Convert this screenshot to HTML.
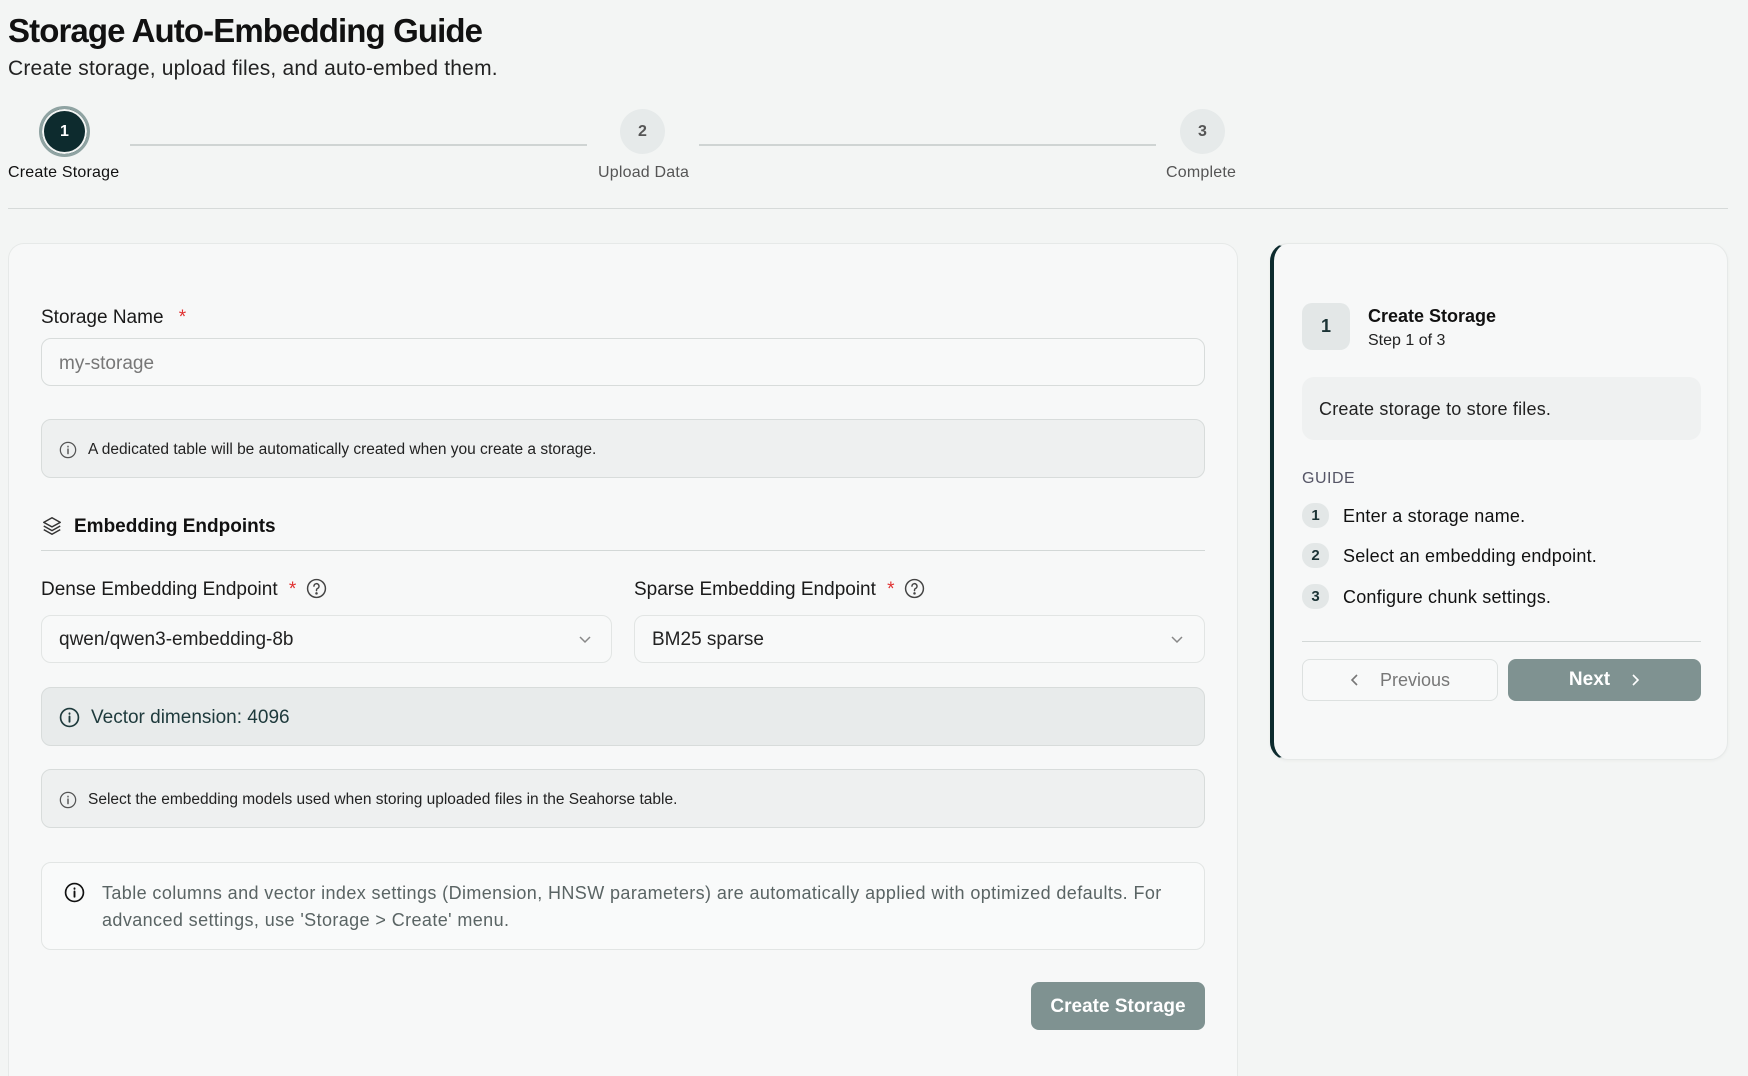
<!DOCTYPE html>
<html style="overflow:hidden;height:1076px"><head><meta charset="utf-8"><style>
*{box-sizing:border-box;margin:0;padding:0}
body{width:1748px;height:1076px;overflow:hidden;background:#f3f5f4;font-family:"Liberation Sans",sans-serif;color:#111;position:relative}
.a{position:absolute}
.t{white-space:nowrap}
.circ{border-radius:50%;display:flex;align-items:center;justify-content:center;font-weight:bold}
.box{border:1px solid #d8dcdb;border-radius:10px}
.info{background:#eef0f0;display:flex;align-items:center;padding-left:17px;font-size:15.5px;color:#222}
.ic{width:18px;height:18px;margin-right:11px;flex:none}
.sel{background:#f8f9f9;border:1px solid #e2e5e4;border-radius:10px;display:flex;align-items:center;padding-left:17px;font-size:19px;color:#222;padding-top:2px}
.lbl{font-size:19px;color:#1a1a1a}
.req{color:#e03131}
</style></head><body>
<div class="a t" style="left:8px;top:12px;font-size:33px;font-weight:bold;letter-spacing:-0.9px">Storage Auto-Embedding Guide</div>
<div class="a t" style="left:8px;top:57px;font-size:21px;color:#222;letter-spacing:.2px">Create storage, upload files, and auto-embed them.</div>

<div class="a circ" style="left:39px;top:106px;width:51px;height:51px;border:3px solid #8fa3a2;background:#0d2b2e;color:#fff;font-size:16px;box-shadow:inset 0 0 0 2px #f3f5f4">1</div>
<div class="a t" style="left:8px;top:164px;font-size:16px;color:#111;letter-spacing:.2px">Create Storage</div>
<div class="a" style="left:130px;top:144px;width:457px;height:2px;background:#cfd4d3"></div>
<div class="a circ" style="left:620px;top:109px;width:45px;height:45px;background:#e6eaea;color:#555;font-size:16px">2</div>
<div class="a t" style="left:598px;top:164px;font-size:16px;color:#555;letter-spacing:.2px">Upload Data</div>
<div class="a" style="left:699px;top:144px;width:457px;height:2px;background:#cfd4d3"></div>
<div class="a circ" style="left:1180px;top:109px;width:45px;height:45px;background:#e6eaea;color:#555;font-size:16px">3</div>
<div class="a t" style="left:1166px;top:164px;font-size:16px;color:#555;letter-spacing:.2px">Complete</div>
<div class="a" style="left:8px;top:208px;width:1720px;height:1px;background:#d6dad9"></div>

<!-- main card -->
<div class="a" style="left:8px;top:243px;width:1230px;height:833px;background:#f7f8f8;border:1px solid #e6e9e8;border-bottom:none;border-radius:16px 16px 0 0"></div>
<div class="a t lbl" style="left:41px;top:307px">Storage Name <span class="req" style="margin-left:10px">*</span></div>
<div class="a box" style="left:41px;top:338px;width:1164px;height:48px;background:#f8f9f9;display:flex;align-items:center;padding-left:17px;padding-top:3px;font-size:19px;color:#777">my-storage</div>
<div class="a box info" style="left:41px;top:419px;width:1164px;height:59px;padding-top:2px"><svg class="ic" viewBox="0 0 20 20"><circle cx="10" cy="10" r="8.5" fill="none" stroke="#555" stroke-width="1.4"/><path d="M10 9v5M10 6v.5" stroke="#555" stroke-width="1.6" stroke-linecap="round"/></svg>A dedicated table will be automatically created when you create a storage.</div>

<svg class="a" style="left:41px;top:515px" width="22" height="22" viewBox="0 0 24 24" fill="none" stroke="#333" stroke-width="1.6" stroke-linejoin="round"><path d="M12 3 3 8l9 5 9-5z"/><path d="M3 12l9 5 9-5"/><path d="M3 16l9 5 9-5"/></svg>
<div class="a t" style="left:74px;top:516px;font-size:19px;font-weight:bold">Embedding Endpoints</div>
<div class="a" style="left:41px;top:550px;width:1164px;height:1px;background:#d3d8d7"></div>

<div class="a t lbl" style="left:41px;top:579px">Dense Embedding Endpoint <span class="req" style="margin-left:6px">*</span></div>
<svg class="a" style="left:306px;top:578px" width="21" height="21" viewBox="0 0 20 20" fill="none" stroke="#444" stroke-width="1.4"><circle cx="10" cy="10" r="8.5"/><path d="M7.6 7.8a2.4 2.4 0 1 1 3.3 2.2c-.6.3-.9.8-.9 1.4v.6" stroke-linecap="round"/><circle cx="10" cy="14.6" r=".5" fill="#444"/></svg>
<div class="a t lbl" style="left:634px;top:579px">Sparse Embedding Endpoint <span class="req" style="margin-left:6px">*</span></div>
<div class="a" style="left:904px;top:578px"><svg width="21" height="21" viewBox="0 0 20 20" fill="none" stroke="#444" stroke-width="1.4"><circle cx="10" cy="10" r="8.5"/><path d="M7.6 7.8a2.4 2.4 0 1 1 3.3 2.2c-.6.3-.9.8-.9 1.4v.6" stroke-linecap="round"/><circle cx="10" cy="14.6" r=".5" fill="#444"/></svg></div>

<div class="a sel" style="left:41px;top:615px;width:571px;height:48px">qwen/qwen3-embedding-8b</div>
<svg class="a" style="left:578px;top:634px" width="14" height="10" viewBox="0 0 14 10" fill="none" stroke="#888" stroke-width="1.5"><path d="M2 3l5 5 5-5"/></svg>
<div class="a sel" style="left:634px;top:615px;width:571px;height:48px">BM25 sparse</div>
<svg class="a" style="left:1170px;top:634px" width="14" height="10" viewBox="0 0 14 10" fill="none" stroke="#888" stroke-width="1.5"><path d="M2 3l5 5 5-5"/></svg>

<div class="a box info" style="left:41px;top:687px;width:1164px;height:59px;background:#e8ebeb;font-size:19px;color:#1e3a3c;padding-top:2px"><svg class="ic" style="width:21px;height:21px" viewBox="0 0 20 20"><circle cx="10" cy="10" r="8.5" fill="none" stroke="#1e3a3c" stroke-width="1.6"/><path d="M10 9v5M10 6v.5" stroke="#1e3a3c" stroke-width="1.8" stroke-linecap="round"/></svg>Vector dimension: 4096</div>
<div class="a box info" style="left:41px;top:769px;width:1164px;height:59px;padding-top:2px"><svg class="ic" viewBox="0 0 20 20"><circle cx="10" cy="10" r="8.5" fill="none" stroke="#555" stroke-width="1.4"/><path d="M10 9v5M10 6v.5" stroke="#555" stroke-width="1.6" stroke-linecap="round"/></svg>Select the embedding models used when storing uploaded files in the Seahorse table.</div>

<div class="a" style="left:41px;top:862px;width:1164px;height:88px;background:#f9fafa;border:1px solid #e2e5e4;border-radius:10px"></div>
<svg class="a" style="left:64px;top:882px" width="21" height="21" viewBox="0 0 20 20"><circle cx="10" cy="10" r="8.5" fill="none" stroke="#111" stroke-width="1.6"/><path d="M10 9v5M10 6v.5" stroke="#111" stroke-width="1.8" stroke-linecap="round"/></svg>
<div class="a" style="left:102px;top:880px;width:1090px;font-size:18px;line-height:27px;color:#5a6464;letter-spacing:.4px">Table columns and vector index settings (Dimension, HNSW parameters) are automatically applied with optimized defaults. For advanced settings, use 'Storage &gt; Create' menu.</div>

<div class="a" style="left:1031px;top:982px;width:174px;height:48px;background:#7f9291;border-radius:8px;color:#fff;font-size:19px;font-weight:bold;display:flex;align-items:center;justify-content:center;padding-top:2px">Create Storage</div>

<!-- side card -->
<div class="a" style="left:1270px;top:243px;width:458px;height:517px;background:#f7f8f8;border:1px solid #e6e9e8;border-left:4px solid #0d2b2e;border-radius:18px;box-shadow:0 1px 3px rgba(0,0,0,.04)"></div>
<div class="a" style="left:1302px;top:303px;width:48px;height:47px;background:#e3e7e7;border-radius:10px;display:flex;align-items:center;justify-content:center;font-size:18px;font-weight:bold;color:#1b3335">1</div>
<div class="a t" style="left:1368px;top:306px;font-size:18px;font-weight:bold">Create Storage</div>
<div class="a t" style="left:1368px;top:332px;font-size:16px;color:#222">Step 1 of 3</div>
<div class="a" style="left:1302px;top:377px;width:399px;height:63px;background:#eff1f1;border-radius:12px;display:flex;align-items:center;padding-left:17px;padding-top:2px;font-size:18px;color:#222;letter-spacing:.2px">Create storage to store files.</div>
<div class="a t" style="left:1302px;top:470px;font-size:16px;color:#556;letter-spacing:.5px">GUIDE</div>
<div class="a circ" style="left:1302px;top:503px;width:27px;height:25px;background:#e3e7e7;font-size:15px;color:#1b3335;border-radius:12px">1</div>
<div class="a t" style="left:1343px;top:506px;font-size:18px;letter-spacing:.2px">Enter a storage name.</div>
<div class="a circ" style="left:1302px;top:543px;width:27px;height:25px;background:#e3e7e7;font-size:15px;color:#1b3335;border-radius:12px">2</div>
<div class="a t" style="left:1343px;top:546px;font-size:18px;letter-spacing:.2px">Select an embedding endpoint.</div>
<div class="a circ" style="left:1302px;top:584px;width:27px;height:25px;background:#e3e7e7;font-size:15px;color:#1b3335;border-radius:12px">3</div>
<div class="a t" style="left:1343px;top:587px;font-size:18px;letter-spacing:.2px">Configure chunk settings.</div>
<div class="a" style="left:1302px;top:641px;width:399px;height:1px;background:#d3d8d7"></div>
<div class="a" style="left:1302px;top:659px;width:196px;height:42px;border:1px solid #dde1e0;border-radius:8px;background:#f8f9f9;display:flex;align-items:center;justify-content:center;font-size:18px;color:#777"><svg width="10" height="14" viewBox="0 0 10 14" fill="none" stroke="#777" stroke-width="1.6" style="margin-right:20px"><path d="M7 2 2 7l5 5"/></svg>Previous</div>
<div class="a" style="left:1508px;top:659px;width:193px;height:42px;border-radius:8px;background:#7f9291;display:flex;align-items:center;justify-content:center;font-size:19px;font-weight:bold;color:#fff">Next<svg width="10" height="14" viewBox="0 0 10 14" fill="none" stroke="#fff" stroke-width="1.6" style="margin-left:20px"><path d="M3 2l5 5-5 5"/></svg></div>
</body></html>
